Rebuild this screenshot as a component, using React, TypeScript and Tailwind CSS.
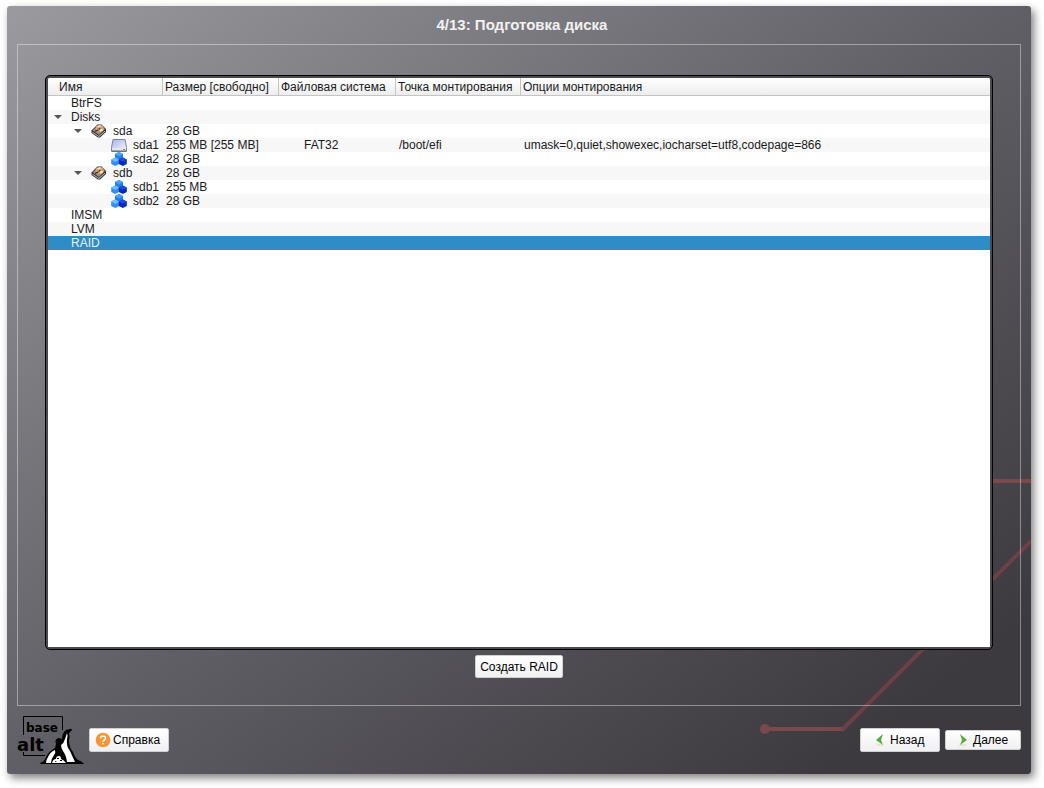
import { ReactNode } from "react";

type Row = {
  name: string;
  level: number;
  open?: boolean;
  icon?: "disk" | "partition" | "raid";
  size?: string;
  fs?: string;
  mount?: string;
  options?: string;
  selected?: boolean;
};

const rows: Row[] = [
  { name: "BtrFS", level: 0 },
  { name: "Disks", level: 0, open: true },
  { name: "sda", level: 1, open: true, icon: "disk", size: "28 GB" },
  {
    name: "sda1",
    level: 2,
    icon: "partition",
    size: "255 MB [255 MB]",
    fs: "FAT32",
    mount: "/boot/efi",
    options: "umask=0,quiet,showexec,iocharset=utf8,codepage=866",
  },
  { name: "sda2", level: 2, icon: "raid", size: "28 GB" },
  { name: "sdb", level: 1, open: true, icon: "disk", size: "28 GB" },
  { name: "sdb1", level: 2, icon: "raid", size: "255 MB" },
  { name: "sdb2", level: 2, icon: "raid", size: "28 GB" },
  { name: "IMSM", level: 0 },
  { name: "LVM", level: 0 },
  { name: "RAID", level: 0, selected: true },
];

const indents = ["pl-[3px]", "pl-[23px]", "pl-[43px]"];

function DiskIcon() {
  return (
    <svg viewBox="0 0 16 14" className="h-[14px] w-4">
      <path d="M.5 6.500 6.500.5h4L15 5v3l-6 5.500H7L.5 9z" fill="#2e2b29" />
      <path d="M1.500 6.500 7 1.200h3.300L14 5 8 11z" fill="#9b8d80" />
      <path d="m1.500 7.800 6.300 4.200L14.200 6.400v1.200L8.300 12.800h-.8L1.500 8.800z" fill="#c9c6c2" />
      <ellipse cx="8.600" cy="4.600" rx="4" ry="3.300" fill="#dca673" />
      <path d="M8.600 4.600 6 2.200q2-1.200 4-.6zM8.600 4.600l3.800 1q-1 1.800-3 2.200z" fill="#fbe6c8" />
      <circle cx="8.600" cy="4.600" r="1.100" fill="#5d4636" />
      <path d="m4 7.500 3.500-1.700" stroke="#2e2b29" strokeWidth="1.200" />
    </svg>
  );
}

function PartitionIcon() {
  return (
    <svg viewBox="0 0 16 14" className="h-[14px] w-4">
      <defs>
        <linearGradient id="lid" x1="0" y1="0" x2="1" y2="1">
          <stop offset="0" stopColor="#a9b3ea" />
          <stop offset="1" stopColor="#f6f6ff" />
        </linearGradient>
      </defs>
      <path d="M2 1.500h12l1.500 8v3.500H.5V9.500z" fill="url(#lid)" stroke="#80839a" />
      <path d="M1 10h14v2.500H1z" fill="#e6e7ee" />
      <path d="M.5 13.200h15" stroke="#4c4e58" />
      <path d="M12 11.500h2" stroke="#6a9a78" />
    </svg>
  );
}

function RaidIcon() {
  return (
    <svg viewBox="0 0 16 14" className="h-[14px] w-4">
      <path d="m8 0 4 2v4.500L8 8.500l-4-2V2z" fill="#1f7df0" />
      <path d="m8 0 4 2-4 2.500L4 2z" fill="#4aa4fb" />
      <path d="m4.200 5.500 4 2V12l-4 2-4-2V7.500z" fill="#2f8ff6" />
      <path d="m4.200 5.500 4 2-4 2.500-4-2.500z" fill="#6fc0ff" />
      <path d="m11.800 5.500 4 2V12l-4 2-4-2V7.500z" fill="#0829b8" />
      <path d="m11.800 5.500 4 2-4 2.500-4-2.500z" fill="#1c4be0" />
    </svg>
  );
}

function Logo() {
  return (
    <svg viewBox="0 0 68 50" className="h-[50px] w-[68px]" role="img" aria-label="basealt">
      <path d="M6.500 20V1.500h39V15M6.500 37v3.500H28" fill="none" stroke="#000" />
      <text x="9" y="17" fontFamily="DejaVu Sans" fontWeight="700" fontSize="12">
        base
      </text>
      <text x="0" y="36" fontFamily="DejaVu Sans" fontWeight="700" fontSize="18">
        alt
      </text>
      {/* parents */}
      <path d="M23 48q5-2 6-6 3-6 9-9l1-4q-2-5 3-6l3 1q0-6 4-9l4-1q1-1 2 1l-2 2-1 1q1 3 0 8 0 6 4 11 2 6 5 8 4 1 6 4H54l-30 0z" />
      <path d="M50 18q1 2 0 6-1 7 3 12l5 11h-8q-1-7-4-11-2-3-2-6 3-2 4-6z" fill="#fff" />
      <path d="M38 35q1 3-1 5-3 4-3 8h-5q0-3 2-6 2-5 7-7z" fill="#fff" />
      {/* chick */}
      <path d="M35 48q1-4 4-4 0-3 3-3 2 0 2 3 3 1 5 4z" fill="#fff" />
      <path d="M40 43h2v1h-2zM43 45h2v1h-2zM38 46l2 1h-2z" />
    </svg>
  );
}

type ButtonProps = { children: ReactNode; className: string };

function Button({ children, className }: ButtonProps) {
  return (
    <button
      type="button"
      className={`flex items-center rounded-xs border border-[#d0d0d2] bg-linear-to-b from-white to-[#f0f0f2] text-xs whitespace-nowrap text-black ${className}`}
    >
      {children}
    </button>
  );
}

export default function App() {
  return (
    <div className="flex h-screen min-h-[400px] bg-white pt-[6px] pr-[13px] pb-[14px] pl-[7px] font-['Liberation_Sans',Arial,sans-serif] text-xs text-[#1a1a1a]">
      <main className="relative isolate flex flex-1 flex-col overflow-hidden rounded-[3px] bg-linear-to-br from-[#9b9a9e] via-[#605f66] to-[#3d3a3f] to-90% shadow-[3px_4px_8px_rgba(0,0,0,0.5)]">
        <svg
          viewBox="0 0 280 300"
          className="absolute right-0 bottom-0 -z-10 h-[300px] w-[280px]"
          fill="none"
          strokeWidth="4"
        >
          <path d="M14 255h78M200 7h80" stroke="#784a4b" />
          <path d="m91 256 189-189" stroke="#6f3f49" />
          <circle cx="14" cy="255" r="5" fill="#784a4b" />
        </svg>

        <h1 className="h-[38px] pl-[6px] text-center text-[15px] leading-[38px] font-bold text-[#f2f2f2]">
          4/13: Подготовка диска
        </h1>

        <section className="mx-[10px] flex min-h-0 flex-1 flex-col items-center border border-white/40 px-[27px] pt-[30px] pb-[27px]">
          <div className="min-h-0 w-full flex-1 rounded-[5px] border border-black bg-[#4b4a4f] p-[2px]">
            <div className="h-full overflow-hidden rounded-t-xs bg-white">
              <table className="w-full table-fixed border-separate border-spacing-0 leading-[14px] whitespace-nowrap">
                <colgroup>
                  <col className="w-[115px]" />
                  <col className="w-[116px]" />
                  <col className="w-[117px]" />
                  <col className="w-[125px]" />
                  <col />
                </colgroup>
                <thead>
                  <tr className="h-[18px] bg-linear-to-b from-white to-[#ececec] text-left *:border-b *:border-[#c4c4c4] *:p-0 *:font-normal">
                    <th className="border-r">
                      <span className="pl-[11px]">Имя</span>
                    </th>
                    <th className="border-r">
                      <span className="pl-[2px]">Размер [свободно]</span>
                    </th>
                    <th className="border-r">
                      <span className="pl-[2px]">Файловая система</span>
                    </th>
                    <th className="border-r">
                      <span className="pl-[2px]">Точка монтирования</span>
                    </th>
                    <th>
                      <span className="pl-[2px]">Опции монтирования</span>
                    </th>
                  </tr>
                </thead>
                <tbody>
                  {rows.map((row) => (
                    <tr
                      key={row.name}
                      className={
                        row.selected
                          ? "h-[14px] bg-[#308cc6] text-[#e8f2fa]"
                          : "h-[14px] even:bg-[#f7f7f7]"
                      }
                    >
                      <td className="p-0">
                        <div className={`flex h-[14px] items-center ${indents[row.level]}`}>
                          <span className="flex w-5 justify-start pl-[3px]">
                            {row.open && (
                              <svg viewBox="0 0 8 4" className="h-1 w-2">
                                <path d="M0 0h8L4 4z" fill="#555" />
                              </svg>
                            )}
                          </span>
                          {row.icon && (
                            <span className="mr-[6px] w-4">
                              {row.icon === "disk" && <DiskIcon />}
                              {row.icon === "partition" && <PartitionIcon />}
                              {row.icon === "raid" && <RaidIcon />}
                            </span>
                          )}
                          {row.name}
                        </div>
                      </td>
                      <td className="py-0 pr-0 pl-[3px]">{row.size}</td>
                      <td className="py-0 pr-0 pl-[25px]">{row.fs}</td>
                      <td className="py-0 pr-0 pl-[3px]">{row.mount}</td>
                      <td className="py-0 pr-0 pl-[3px]">{row.options}</td>
                    </tr>
                  ))}
                </tbody>
              </table>
            </div>
          </div>
          <Button className="mt-[5px] h-[23px] w-[88px] justify-center">Создать RAID</Button>
        </section>

        <footer className="flex h-[68px] items-center px-[10px]">
          <Logo />
          <Button className="ml-1 h-6 w-20 gap-[2px] pl-[5px]">
            <svg viewBox="0 0 16 16" className="size-4">
              <circle cx="8" cy="8" r="7.300" fill="#f79433" />
              <path
                d="M5.500 6.300Q5.700 4 8 4t2.500 2.200Q10.500 7.500 9 8.300q-1 .6-1 1.500M8 11v1.600"
                fill="none"
                stroke="#fff"
                strokeWidth="1.600"
              />
            </svg>
            Справка
          </Button>
          <Button className="ml-auto h-6 w-20 gap-[5px] pl-[14px]">
            <svg viewBox="0 0 10 12" className="h-3 w-[10px]">
              <ellipse cx="5" cy="11" rx="4" ry="1" fill="#dfe6dc" />
              <path d="M8 0 1 6l7 5-2-5z" fill="#5aa83c" />
            </svg>
            Назад
          </Button>
          <Button className="ml-[5px] h-5 w-[76px] gap-[5px] pl-3">
            <svg viewBox="0 0 10 12" className="h-3 w-[10px]">
              <ellipse cx="5" cy="11" rx="4" ry="1" fill="#dfe6dc" />
              <path d="m2 0 7 6-7 5 2-5z" fill="#5aa83c" />
            </svg>
            Далее
          </Button>
        </footer>
      </main>
    </div>
  );
}
